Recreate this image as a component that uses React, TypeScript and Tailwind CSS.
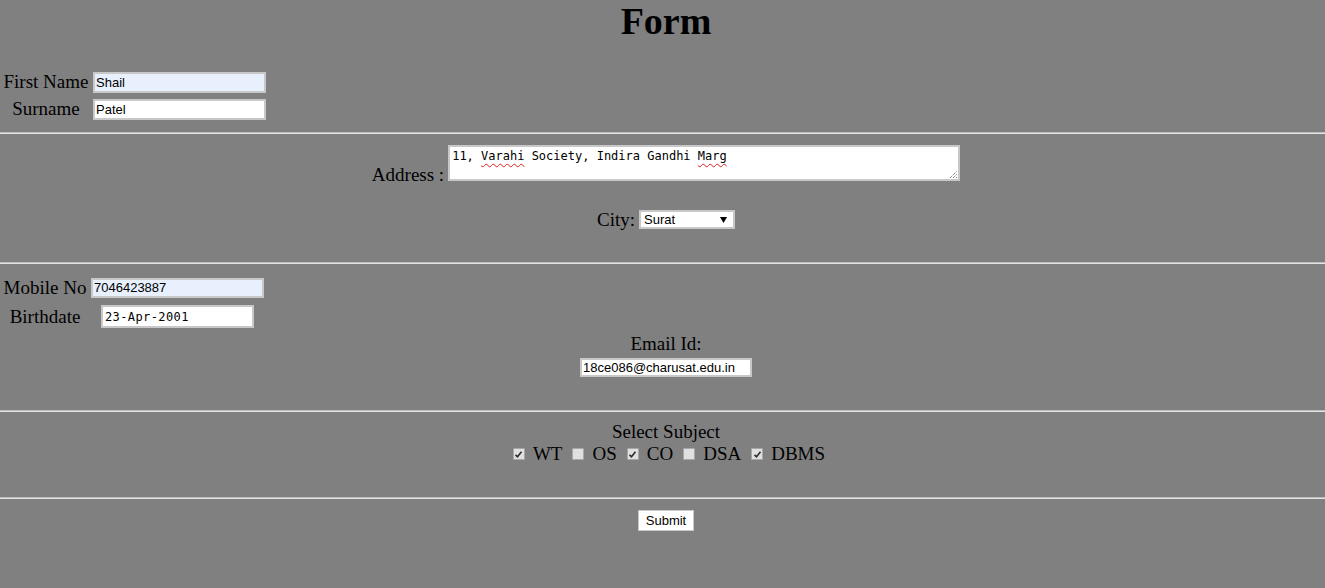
const serif = "font-['Liberation_Serif','Times_New_Roman',serif]";
const sans = "font-['Liberation_Sans',Arial,sans-serif]";
const mono = "font-['DejaVu_Sans_Mono','Liberation_Mono',monospace]";

const Rule = () => <div className="h-[2px] w-full bg-[#e4e4e4] border-t border-[#bdbdbd]" />;

const Field = ({ value, w, h, fill = false, _className = "" }: { value: string; w: string; h: string; fill?: boolean; _className?: string }) => (
    <div className={`${w} ${h} ${fill ? "bg-[#e8f0fe]" : "bg-white"} border-2 border-[#c8c8c8] flex items-center pl-[1px] text-[13px] text-black ${sans} ${_className}`}>
        {value}
    </div>
);

const Check = ({ on }: { on: boolean }) => (
    <span className="inline-flex w-[12px] h-[12px] bg-[#e0e0e0] border border-[#a8a8a8] rounded-[1px] items-center justify-center">
        {on && (
            <svg width="9" height="9" viewBox="0 0 9 9">
                <path d="M1.5 4.8 L3.5 6.8 L7.5 1.8" stroke="#303030" strokeWidth="1.7" fill="none" />
            </svg>
        )}
    </span>
);

const subjects = [
    {name: "WT", on: true},
    {name: "OS", on: false},
    {name: "CO", on: true},
    {name: "DSA", on: false},
    {name: "DBMS", on: true},
];

const App = () => {
    return (
        <div className={`min-h-[588px] w-full bg-[#808080] text-black ${serif}`}>
            {/* name */}
            <div className="h-[72px] pl-[7px]">
                <h1 className="text-center text-[38px] font-bold leading-[42px]">Form</h1>
            </div>
            <div className="flex items-center h-[21px]">
                <span className="w-[86px] ml-[3px] text-center text-[19px] leading-[21px] mt-[-2px] whitespace-nowrap">First Name</span>
                <Field value="Shail" w="w-[173px]" h="h-[21px]" fill _className="ml-[4px]"/>
            </div>
            <div className="flex items-center h-[21px] mt-[6px]">
                <span className="w-[86px] ml-[3px] text-center text-[19px] leading-[21px] mt-[-2px]">Surname</span>
                <Field value="Patel" w="w-[173px]" h="h-[21px]" _className="ml-[4px]"/>
            </div>
            <div className="mt-[12px]"><Rule/></div>

            {/* address */}
            <div className="flex justify-center items-end mt-[11px] pl-[7px]">
                <span className="text-[19px] leading-[19px] mb-[-3px] mr-[4px]">Address :</span>
                <div className={`relative w-[512px] h-[36px] bg-white border-2 border-[#c8c8c8] pl-[2px] pt-[1px] text-[12px] leading-[16px] text-black ${mono}`}>
                    11, <span className="underline decoration-wavy decoration-[#e02020] decoration-1 underline-offset-[3px]">Varahi</span> Society, Indira Gandhi <span className="underline decoration-wavy decoration-[#e02020] decoration-1 underline-offset-[3px]">Marg</span>
                    <svg className="absolute right-0 bottom-0" width="9" height="9" viewBox="0 0 9 9">
                        <path d="M1 8 L8 1 M4 8 L8 4 M7 8 L8 7" stroke="#555" strokeWidth="1" strokeDasharray="1 1" />
                    </svg>
                </div>
            </div>
            <div className="flex justify-center items-center h-[19px] mt-[29px] pl-[7px]">
                <span className="text-[19px] leading-[21px] mr-[4px]">City:</span>
                <div className={`relative w-[96px] h-[19px] bg-white border-2 border-[#c8c8c8] flex items-center pl-[3px] text-[13px] ${sans}`}>
                    Surat
                    <svg className="absolute right-[6px] top-[5px]" width="7" height="6" viewBox="0 0 7 6">
                        <path d="M0 0 H7 L3.5 6 Z" fill="#000" />
                    </svg>
                </div>
            </div>
            <div className="mt-[33px]"><Rule/></div>

            {/* contact */}
            <div className="flex items-center h-[20px] mt-[14px]">
                <span className="w-[84px] ml-[3px] text-center text-[19px] leading-[21px] mt-[-2px] whitespace-nowrap">Mobile No</span>
                <Field value="7046423887" w="w-[173px]" h="h-[20px]" fill _className="ml-[4px]"/>
            </div>
            <div className="flex items-center h-[23px] mt-[7px]">
                <span className="w-[84px] ml-[3px] text-center text-[19px] leading-[21px]">Birthdate</span>
                <div className={`ml-[14px] w-[153px] h-[23px] bg-white border-2 border-[#c8c8c8] flex items-center pl-[2px] text-[12px] tracking-[0.4px] ${mono}`}>
                    23-Apr-2001
                </div>
            </div>
            <div className="flex flex-col items-center mt-[5px] pl-[7px]">
                <span className="text-[19px] leading-[22px]">Email Id:</span>
                <Field value="18ce086@charusat.edu.in" w="w-[172px]" h="h-[19px]" _className="mt-[3px]"/>
            </div>
            <div className="mt-[33px]"><Rule/></div>

            {/* subjects */}
            <div className="flex flex-col items-center mt-[9px] pl-[7px]">
                <span className="text-[19px] leading-[22px]">Select Subject</span>
                <div className="flex items-center h-[22px] ml-[6px]">
                    {subjects.map((s, index) => (
                        <div key={index} className="flex items-center">
                            <Check on={s.on}/>
                            <span className={`text-[19px] leading-[22px] ml-[8px] ${index < subjects.length - 1 ? "mr-[10px]" : ""}`}>{s.name}</span>
                        </div>
                    ))}
                </div>
            </div>
            <div className="mt-[32px]"><Rule/></div>

            <div className="flex justify-center mt-[11px] pl-[7px]">
                <div className={`w-[56px] h-[21px] bg-white border border-[#c8c8c8] flex items-center justify-center text-[13px] ${sans}`}>
                    Submit
                </div>
            </div>
        </div>
    )
}
export default App;
